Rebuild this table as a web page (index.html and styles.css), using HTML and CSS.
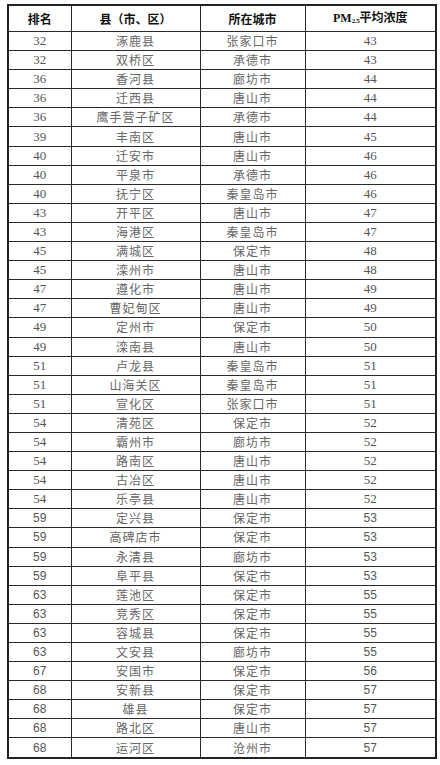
FILE: index.html
```html
<!DOCTYPE html>
<html lang="zh-CN">
<head>
<meta charset="utf-8">
<title>PM2.5 排名</title>
<link rel="stylesheet" href="styles.css">
</head>
<body>
<table class="rank">
  <colgroup>
    <col class="c1"><col class="c2"><col class="c3"><col class="c4">
  </colgroup>
  <thead>
    <tr><th>排名</th><th>县（市、区）</th><th>所在城市</th><th><span class="pm">PM<sub>2.5</sub></span>平均浓度</th></tr>
  </thead>
  <tbody>
    <tr><td class="n">32</td><td>涿鹿县</td><td>张家口市</td><td class="n">43</td></tr>
    <tr><td class="n">32</td><td>双桥区</td><td>承德市</td><td class="n">43</td></tr>
    <tr><td class="n">36</td><td>香河县</td><td>廊坊市</td><td class="n">44</td></tr>
    <tr><td class="n">36</td><td>迁西县</td><td>唐山市</td><td class="n">44</td></tr>
    <tr><td class="n">36</td><td>鹰手营子矿区</td><td>承德市</td><td class="n">44</td></tr>
    <tr><td class="n">39</td><td>丰南区</td><td>唐山市</td><td class="n">45</td></tr>
    <tr><td class="n">40</td><td>迁安市</td><td>唐山市</td><td class="n">46</td></tr>
    <tr><td class="n">40</td><td>平泉市</td><td>承德市</td><td class="n">46</td></tr>
    <tr><td class="n">40</td><td>抚宁区</td><td>秦皇岛市</td><td class="n">46</td></tr>
    <tr><td class="n">43</td><td>开平区</td><td>唐山市</td><td class="n">47</td></tr>
    <tr><td class="n">43</td><td>海港区</td><td>秦皇岛市</td><td class="n">47</td></tr>
    <tr><td class="n">45</td><td>满城区</td><td>保定市</td><td class="n">48</td></tr>
    <tr><td class="n">45</td><td>滦州市</td><td>唐山市</td><td class="n">48</td></tr>
    <tr><td class="n">47</td><td>遵化市</td><td>唐山市</td><td class="n">49</td></tr>
    <tr><td class="n">47</td><td>曹妃甸区</td><td>唐山市</td><td class="n">49</td></tr>
    <tr><td class="n">49</td><td>定州市</td><td>保定市</td><td class="n">50</td></tr>
    <tr><td class="n">49</td><td>滦南县</td><td>唐山市</td><td class="n">50</td></tr>
    <tr><td class="n">51</td><td>卢龙县</td><td>秦皇岛市</td><td class="n">51</td></tr>
    <tr><td class="n">51</td><td>山海关区</td><td>秦皇岛市</td><td class="n">51</td></tr>
    <tr><td class="n">51</td><td>宣化区</td><td>张家口市</td><td class="n">51</td></tr>
    <tr><td class="n">54</td><td>清苑区</td><td>保定市</td><td class="n">52</td></tr>
    <tr><td class="n">54</td><td>霸州市</td><td>廊坊市</td><td class="n">52</td></tr>
    <tr><td class="n">54</td><td>路南区</td><td>唐山市</td><td class="n">52</td></tr>
    <tr><td class="n">54</td><td>古冶区</td><td>唐山市</td><td class="n">52</td></tr>
    <tr><td class="n">54</td><td>乐亭县</td><td>唐山市</td><td class="n">52</td></tr>
    <tr class="sans"><td class="n">59</td><td>定兴县</td><td>保定市</td><td class="n">53</td></tr>
    <tr class="sans"><td class="n">59</td><td>高碑店市</td><td>保定市</td><td class="n">53</td></tr>
    <tr class="sans"><td class="n">59</td><td>永清县</td><td>廊坊市</td><td class="n">53</td></tr>
    <tr class="sans"><td class="n">59</td><td>阜平县</td><td>保定市</td><td class="n">53</td></tr>
    <tr class="sans"><td class="n">63</td><td>莲池区</td><td>保定市</td><td class="n">55</td></tr>
    <tr class="sans"><td class="n">63</td><td>竞秀区</td><td>保定市</td><td class="n">55</td></tr>
    <tr class="sans"><td class="n">63</td><td>容城县</td><td>保定市</td><td class="n">55</td></tr>
    <tr class="sans"><td class="n">63</td><td>文安县</td><td>廊坊市</td><td class="n">55</td></tr>
    <tr class="sans"><td class="n">67</td><td>安国市</td><td>保定市</td><td class="n">56</td></tr>
    <tr class="sans"><td class="n">68</td><td>安新县</td><td>保定市</td><td class="n">57</td></tr>
    <tr class="sans"><td class="n">68</td><td>雄县</td><td>保定市</td><td class="n">57</td></tr>
    <tr class="sans"><td class="n">68</td><td>路北区</td><td>唐山市</td><td class="n">57</td></tr>
    <tr class="sans"><td class="n">68</td><td>运河区</td><td>沧州市</td><td class="n">57</td></tr>
  </tbody>
</table>
</body>
</html>
```

FILE: styles.css
```css
html, body {
  margin: 0;
  padding: 0;
  background: #ffffff;
}

body {
  padding: 4px 0 0 7px;
  font-family: "Noto Sans CJK SC", sans-serif;
}

.rank {
  border-collapse: collapse;
  table-layout: fixed;
  width: 428px;
  border: 2px solid #222;
}

.c1 { width: 63px; }
.c2 { width: 129px; }
.c3 { width: 105px; }
.c4 { width: 131px; }

.rank th,
.rank td {
  border: 1px solid #2a2a2a;
  padding: 0;
  text-align: center;
  vertical-align: middle;
  overflow: hidden;
  white-space: nowrap;
}

.rank th {
  height: 25px;
  font-size: 12px;
  font-weight: 700;
  color: #111;
  line-height: 14px;
}

.pm {
  font-family: "Liberation Serif", serif;
  font-weight: 700;
  font-size: 12px;
}

.pm sub {
  font-size: 7px;
  vertical-align: -1px;
  letter-spacing: -0.3px;
}

.rank td {
  height: 18.1px;
  font-size: 12px;
  line-height: 14px;
  color: #666;
  letter-spacing: 1px;
}

.rank td.n {
  font-family: "Liberation Serif", serif;
  font-size: 13px;
  letter-spacing: 0;
  color: #555;
}

.rank tr.sans td.n {
  font-family: "Liberation Sans", sans-serif;
  font-size: 12px;
}
```
